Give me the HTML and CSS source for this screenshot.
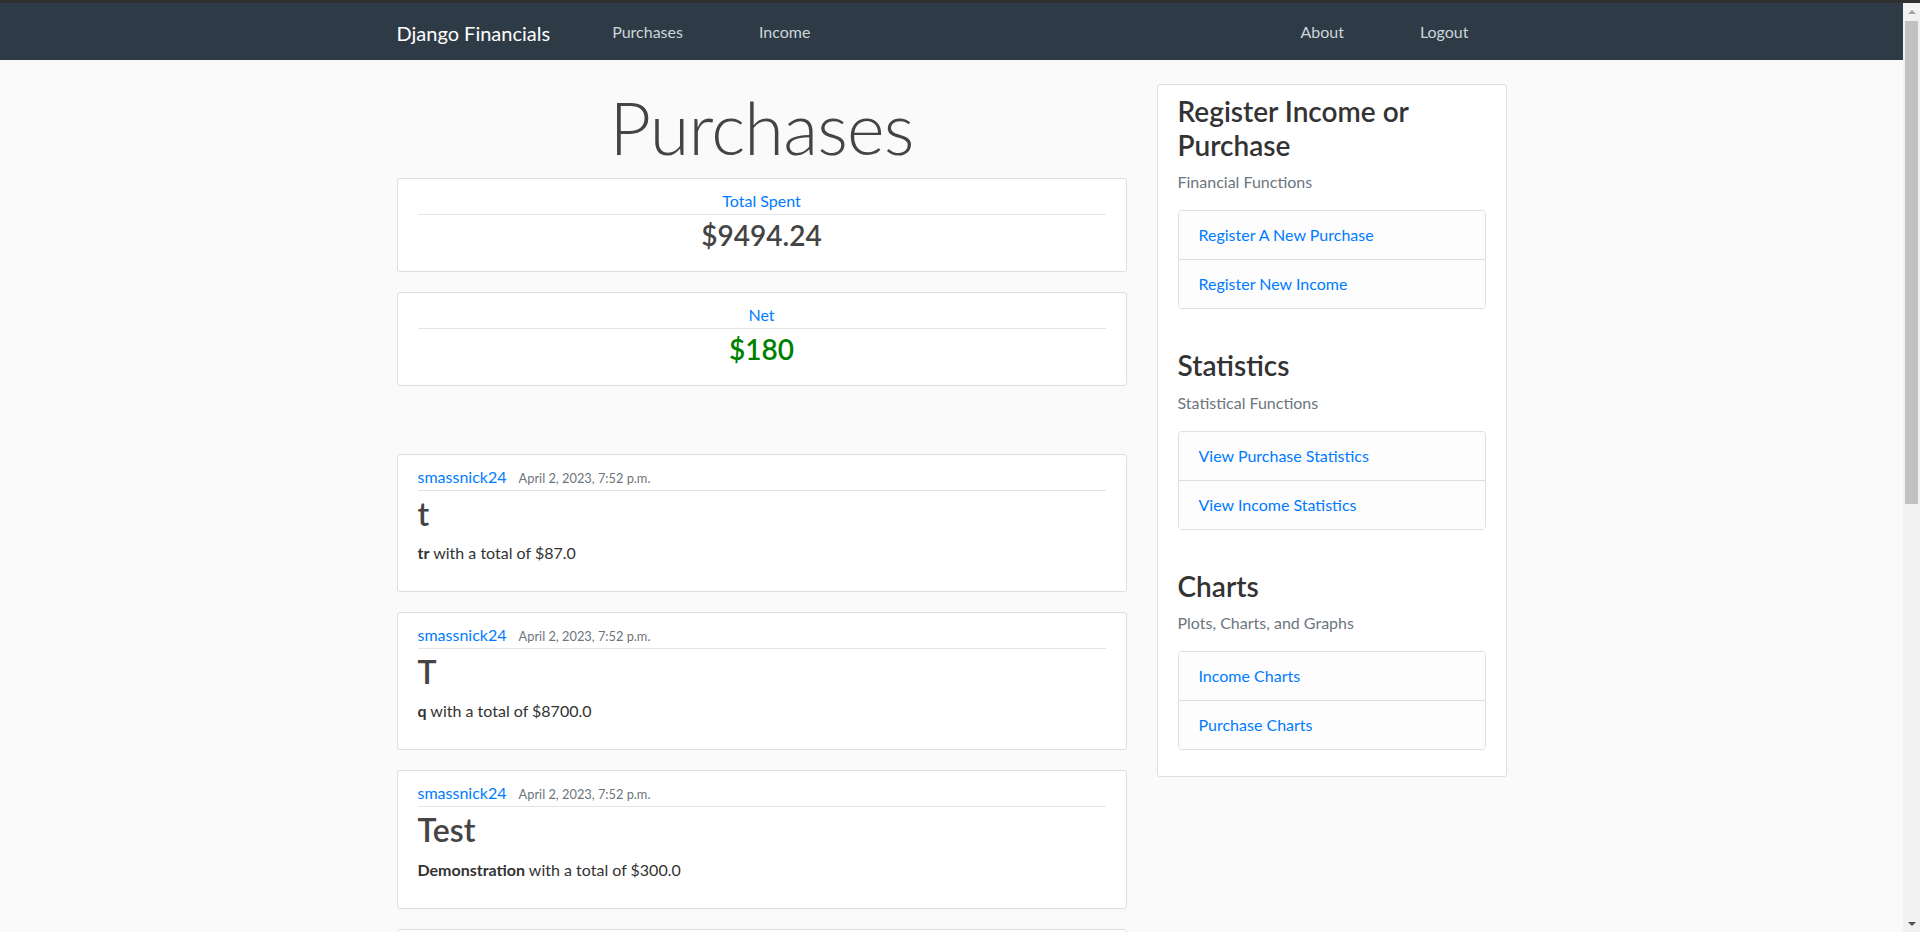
FILE: index.html
```html
<!DOCTYPE html>
<html lang="en">
<head>
<meta charset="utf-8">
<title>Django Financials - Purchases</title>
<link rel="stylesheet" href="styles.css">
</head>
<body>
<div class="frame-top"></div>
<div class="window">
  <div class="page">
    <header class="site-header">
      <nav class="navbar">
        <div class="nav-inner">
          <a class="brand" href="#">Django Financials</a>
          <div class="nav-group">
            <a class="nav-link" href="#">Purchases</a>
            <a class="nav-link" href="#">Income</a>
          </div>
          <div class="nav-group nav-right">
            <a class="nav-link" href="#">About</a>
            <a class="nav-link" href="#">Logout</a>
          </div>
        </div>
      </nav>
    </header>

    <main class="container">
      <div class="main-col">
        <h1 class="page-title">Purchases</h1>

        <div class="content-section summary">
          <a class="summary-label" href="#">Total Spent</a>
          <h3 class="amount">$9494.24</h3>
        </div>
        <div class="content-section summary">
          <a class="summary-label" href="#">Net</a>
          <h3 class="amount positive">$180</h3>
        </div>

        <div class="purchases">
          <article class="content-section">
            <div class="article-meta">
              <a class="author" href="#">smassnick24</a>
              <small class="date">April 2, 2023, 7:52 p.m.</small>
            </div>
            <h2 class="article-title">t</h2>
            <p class="article-content"><strong>tr</strong> with a total of $87.0</p>
          </article>
          <article class="content-section">
            <div class="article-meta">
              <a class="author" href="#">smassnick24</a>
              <small class="date">April 2, 2023, 7:52 p.m.</small>
            </div>
            <h2 class="article-title">T</h2>
            <p class="article-content"><strong>q</strong> with a total of $8700.0</p>
          </article>
          <article class="content-section">
            <div class="article-meta">
              <a class="author" href="#">smassnick24</a>
              <small class="date">April 2, 2023, 7:52 p.m.</small>
            </div>
            <h2 class="article-title">Test</h2>
            <p class="article-content"><strong>Demonstration</strong> with a total of $300.0</p>
          </article>
          <article class="content-section article-more"></article>
        </div>
      </div>

      <aside class="side-col">
        <div class="content-section sidebar">
          <section class="side-group">
            <h3 class="side-title">Register Income or Purchase</h3>
            <p class="text-muted">Financial Functions</p>
            <ul class="list-group">
              <li class="list-group-item"><a href="#">Register A New Purchase</a></li>
              <li class="list-group-item"><a href="#">Register New Income</a></li>
            </ul>
          </section>
          <section class="side-group">
            <h3 class="side-title">Statistics</h3>
            <p class="text-muted">Statistical Functions</p>
            <ul class="list-group">
              <li class="list-group-item"><a href="#">View Purchase Statistics</a></li>
              <li class="list-group-item"><a href="#">View Income Statistics</a></li>
            </ul>
          </section>
          <section class="side-group">
            <h3 class="side-title">Charts</h3>
            <p class="text-muted">Plots, Charts, and Graphs</p>
            <ul class="list-group">
              <li class="list-group-item"><a href="#">Income Charts</a></li>
              <li class="list-group-item"><a href="#">Purchase Charts</a></li>
            </ul>
          </section>
        </div>
      </aside>
    </main>
  </div>

  <div class="scrollbar" aria-hidden="true">
    <div class="sb-btn"><span class="arrow-up"></span></div>
    <div class="sb-track"><div class="sb-thumb"></div></div>
    <div class="sb-btn"><span class="arrow-down"></span></div>
  </div>
</div>
</body>
</html>
```

FILE: styles.css
```css
html, body {
  margin: 0;
  height: 100%;
  overflow: hidden;
}

body {
  display: flex;
  flex-direction: column;
  background: #fafafa;
  color: #333333;
  font-family: Lato, "Liberation Sans", sans-serif;
  font-size: 16px;
  line-height: 1.5;
}

a {
  color: #007bff;
  text-decoration: none;
}

.frame-top {
  flex: none;
  height: 3px;
  background: #2f2f2f;
}

.window {
  flex: 1;
  display: flex;
  min-height: 0;
}

.page {
  flex: 1;
  min-width: 0;
  overflow: hidden;
}

/* ---------- navbar ---------- */
.navbar {
  height: 57px;
  background: #2e3b46;
  display: flex;
  align-items: center;
}

.nav-inner {
  width: 1110px;
  margin: 0 auto;
  display: flex;
  align-items: center;
}

.brand {
  color: #ffffff;
  font-size: 20px;
  line-height: 30px;
  margin-top: 2px;
  margin-right: 62px;
}

.nav-group {
  display: flex;
  gap: 76px;
}

.nav-right {
  margin-left: auto;
  padding-right: 38px;
}

.nav-link {
  color: #cbd5db;
  font-size: 16px;
  line-height: 24px;
  margin-top: 1px;
}

/* ---------- layout ---------- */
.container {
  width: 1110px;
  margin: 0 auto;
  padding-top: 24px;
  display: grid;
  grid-template-columns: 730px 350px;
  column-gap: 30px;
  align-items: start;
}

.page-title {
  margin: 0 0 8px;
  font-size: 72px;
  font-weight: 300;
  line-height: 1.2;
  letter-spacing: -0.8px;
  text-align: center;
  color: #444444;
}

.content-section {
  background: #ffffff;
  padding: 10px 20px;
  border: 1px solid #dddddd;
  border-radius: 3px;
  margin-bottom: 20px;
}

/* ---------- summary cards ---------- */
.summary-label {
  display: block;
  text-align: center;
  padding-bottom: 1px;
  margin-bottom: 4px;
  border-bottom: 1px solid #e3e3e3;
}

.amount {
  margin: 0 0 8px;
  font-size: 28px;
  font-weight: 600;
  line-height: 1.2;
  text-align: center;
  color: #444444;
}

.amount.positive {
  color: green;
}

/* ---------- purchase articles ---------- */
.purchases {
  padding-top: 48px;
}

.article-meta {
  padding-bottom: 1px;
  margin-bottom: 4px;
  border-bottom: 1px solid #e3e3e3;
}

.author {
  margin-right: 8px;
}

.date {
  font-size: 80%;
  color: #6c757d;
}

.article-title {
  margin: 0 0 8px;
  font-size: 32px;
  font-weight: 600;
  line-height: 1.2;
  color: #444444;
}

.article-content {
  margin: 0 0 16px;
  color: #333333;
}

.article-content strong {
  font-weight: 700;
}

.article-more {
  height: 120px;
}

/* ---------- sidebar ---------- */
.side-group + .side-group {
  margin-top: 40px;
}

.side-title {
  margin: 0 0 8px;
  font-size: 28px;
  font-weight: 600;
  line-height: 1.2;
  color: #333333;
}

.text-muted {
  margin: 0 0 16px;
  color: #6c757d;
}

.list-group {
  list-style: none;
  margin: 0 0 16px;
  padding: 0;
  border: 1px solid rgba(0, 0, 0, 0.125);
  border-radius: 4px;
  overflow: hidden;
}

.list-group-item {
  padding: 12px 20px;
  background: #fdfdfe;
}

.list-group-item + .list-group-item {
  border-top: 1px solid rgba(0, 0, 0, 0.125);
}

/* ---------- scrollbar ---------- */
.scrollbar {
  flex: none;
  width: 17px;
  background: #f1f1f1;
  display: flex;
  flex-direction: column;
}

.sb-btn {
  flex: none;
  height: 17px;
  display: flex;
  align-items: center;
  justify-content: center;
}

.arrow-up {
  width: 0;
  height: 0;
  border-left: 4px solid transparent;
  border-right: 4px solid transparent;
  border-bottom: 4px solid #a3a3a3;
}

.arrow-down {
  width: 0;
  height: 0;
  border-left: 4px solid transparent;
  border-right: 4px solid transparent;
  border-top: 4px solid #505050;
}

.sb-track {
  flex: 1;
  padding: 1px 2px 0;
}

.sb-thumb {
  height: 483px;
  background: #c1c1c1;
}
```
